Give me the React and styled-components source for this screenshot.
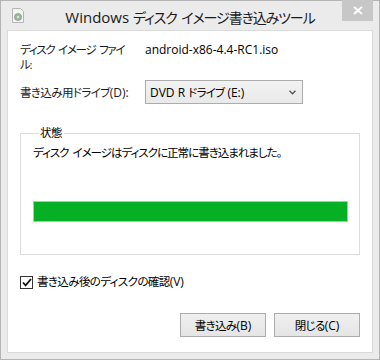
import React from 'react';
import styled, { createGlobalStyle } from 'styled-components';

const GlobalStyle = createGlobalStyle`
  html, body {
    margin: 0;
    padding: 0;
    background: #ffffff;
  }
`;

const ui = `'Open Sans', 'Noto Sans CJK JP', sans-serif`;

const Window = styled.div`
  width: 380px;
  height: 360px;
  box-sizing: border-box;
  border: 1px solid #b4b4b4;
  background: #ebebeb;
  display: flex;
  flex-direction: column;
  font-family: ${ui};
  font-feature-settings: 'palt';
  color: #000;
`;

const TitleBar = styled.div`
  height: 29px;
  display: grid;
  grid-template-columns: 1fr auto 1fr;
  align-items: start;
`;

const TitleIcon = styled.div`
  padding: 7px 0 0 11px;
  line-height: 0;
`;

const Title = styled.div`
  font-size: 15px;
  line-height: 20px;
  padding-top: 6px;
  color: #1a1a1a;
  white-space: nowrap;
`;

const Jp = styled.span`
  font-size: ${p => p.$size || 11.5}px;
  letter-spacing: ${p => p.$ls ?? -1}px;
  word-spacing: ${p => p.$ws ?? 2}px;
`;

const CloseButton = styled.div`
  justify-self: end;
  margin: -1px 6px 0 0;
  width: 31px;
  height: 21px;
  background: #c7c7c7;
  display: flex;
  align-items: center;
  justify-content: center;
`;

const Client = styled.div`
  flex: 1;
  margin: 0 6px 6px;
  background: #fff;
  border: 1px solid #dadada;
  padding: 11px 12px 15px 12px;
  display: flex;
  flex-direction: column;
  font-size: 12px;
`;

const Row = styled.div`
  display: grid;
  grid-template-columns: 125px 1fr;
  align-items: ${p => (p.$center ? 'center' : 'start')};
  margin-top: ${p => p.$gap || 0}px;
`;

const Label = styled.div`
  line-height: 15px;
  color: #1a1a1a;
  white-space: nowrap;
`;

const Value = styled.div`
  line-height: 15px;
`;

const Select = styled.div`
  width: 158px;
  height: 24px;
  box-sizing: border-box;
  border: 1px solid #acacac;
  background: linear-gradient(#f2f2f2, #e9e9e9);
  display: flex;
  align-items: center;
  justify-content: space-between;
  padding: 0 6px 0 4px;
  font-size: 12px;
`;

const Group = styled.fieldset`
  margin: 22px 0 0;
  border: 1px solid #dcdcdc;
  padding: 5px 11px 0 12px;
  height: 129px;
  box-sizing: border-box;
`;

const Legend = styled.legend`
  margin-left: 6px;
  padding: 0 2px 0 1px;
  line-height: 14px;
`;

const StatusText = styled.div`
  line-height: 16px;
`;

const Progress = styled.div`
  margin-top: 40px;
  height: 21px;
  box-sizing: border-box;
  border: 1px solid #bcbcbc;
  background: #e6e6e6;
`;

const ProgressFill = styled.div`
  height: 100%;
  background: #06b025;
`;

const CheckRow = styled.label`
  display: flex;
  align-items: center;
  gap: 4px;
  margin-top: 19px;
  line-height: 16px;
`;

const CheckBox = styled.span`
  width: 13px;
  height: 13px;
  box-sizing: border-box;
  border: 1px solid #333;
  background: #fff;
  display: flex;
  align-items: center;
  justify-content: center;
`;

const Buttons = styled.div`
  margin-top: auto;
  display: flex;
  justify-content: flex-end;
  gap: 8px;
`;

const Button = styled.div`
  width: 86px;
  height: 24px;
  box-sizing: border-box;
  border: 1px solid #acacac;
  background: linear-gradient(#f0f0f0, #e5e5e5);
  display: flex;
  align-items: center;
  justify-content: center;
  font-size: 12px;
`;

const DiscIcon = () => (
  <svg width="12" height="15" viewBox="0 0 12 15">
    <path d="M0.5 0.5h8l3 3v11h-11z" fill="#f4f4f4" stroke="#b5b5b5" />
    <circle cx="6" cy="9" r="3.6" fill="#9db89a" stroke="#8a8a8a" strokeWidth="0.6" />
    <circle cx="6" cy="9" r="1" fill="#f4f4f4" />
  </svg>
);

const CloseX = () => (
  <svg width="10" height="9" viewBox="0 0 10 9">
    <path d="M1 1l8 7M9 1l-8 7" stroke="#fff" strokeWidth="2" />
  </svg>
);

const Chevron = () => (
  <svg width="7" height="5" viewBox="0 0 7 5">
    <path d="M0.5 0.8l3 3 3-3" fill="none" stroke="#555" strokeWidth="1.3" />
  </svg>
);

const Check = () => (
  <svg width="10" height="9" viewBox="0 0 10 9">
    <path d="M1 4.5l2.6 2.8L9 1" fill="none" stroke="#111" strokeWidth="1.8" />
  </svg>
);

export default function App() {
  const progress = 100;
  return (
    <>
      <GlobalStyle />
      <Window>
        <TitleBar>
          <TitleIcon><DiscIcon /></TitleIcon>
          <Title>
            Windows <Jp $size={14} $ls={-1.1}>ディスク イメージ書き込みツール</Jp>
          </Title>
          <CloseButton><CloseX /></CloseButton>
        </TitleBar>
        <Client>
          <Row>
            <Label><Jp $ls={-1.3}>ディスク イメージ ファイ<br />ル:</Jp></Label>
            <Value>android-x86-4.4-RC1.iso</Value>
          </Row>
          <Row $center $gap={8}>
            <Label><Jp $ls={-0.6}>書き込み用ドライブ</Jp>(D):</Label>
            <Select>
              <span>DVD R <Jp $ls={-0.8}>ドライブ</Jp> (E:)</span>
              <Chevron />
            </Select>
          </Row>
          <Group>
            <Legend><Jp $ls={-0.5}>状態</Jp></Legend>
            <StatusText><Jp>ディスク イメージはディスクに正常に書き込まれました。</Jp></StatusText>
            <Progress>
              <ProgressFill style={{ width: `${progress}%` }} />
            </Progress>
          </Group>
          <CheckRow>
            <CheckBox><Check /></CheckBox>
            <span><Jp $ls={-0.6}>書き込み後のディスクの確認</Jp>(V)</span>
          </CheckRow>
          <Buttons>
            <Button><Jp $ls={-0.6}>書き込み</Jp>(B)</Button>
            <Button><Jp $ls={-0.6}>閉じる</Jp>(C)</Button>
          </Buttons>
        </Client>
      </Window>
    </>
  );
}
